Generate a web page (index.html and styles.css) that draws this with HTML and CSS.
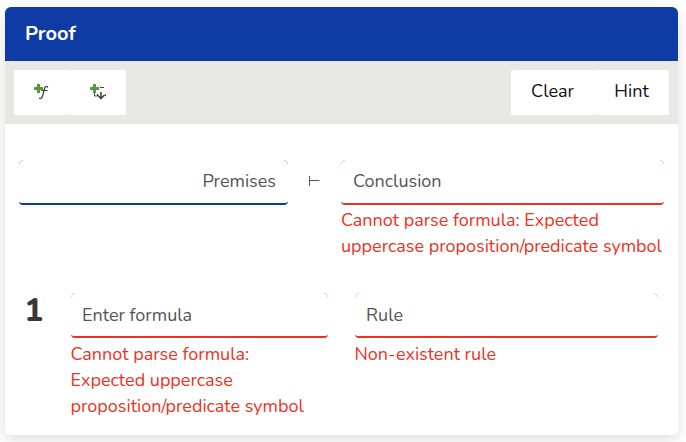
FILE: index.html
```html
<!DOCTYPE html>
<html lang="en">
<head>
<meta charset="utf-8">
<title>Proof</title>
<link rel="stylesheet" href="styles.css">
</head>
<body>
<main class="card">
  <header class="card-header">Proof</header>
  <div class="toolbar">
    <div class="group">
      <button class="btn icon-btn" aria-label="Add formula">
        <svg width="16" height="18" viewBox="0 0 16 18"><path class="curve" d="M13.600 4.100C12.600 2.800 11.200 3.400 10.600 5.500L8.700 12.500C8 15.300 6.800 16.100 5.500 15.200"/><path class="arrow" d="M7 7.500h6.500"/><path class="plus" d="M3 1h3v3h3v3H6v3H3V7H0V4h3z"/></svg>
      </button>
      <button class="btn icon-btn" aria-label="Add box">
        <svg width="16" height="18" viewBox="0 0 16 18"><path class="arrow" d="M10 4.500h4M4.500 10v3H7M7.500 11v2M15.500 11v2"/><path class="arrow-bold" d="M11 9v6.500M7.500 12L11 15.500L14.500 12"/><path class="plus" d="M3 1h3v3h3v3H6v3H3V7H0V4h3z"/></svg>
      </button>
    </div>
    <div class="group">
      <button class="btn clear">Clear</button>
      <button class="btn hint">Hint</button>
    </div>
  </div>
  <section class="sequent">
    <div class="field ok"><div class="input right">Premises</div></div>
    <svg class="turnstile" width="12" height="10" viewBox="0 0 12 10"><path d="M1.500 0v10M1.500 4.500H11.500"/></svg>
    <div class="field error">
      <div class="input">Conclusion</div>
      <p class="message">Cannot parse formula: Expected<br>uppercase proposition/predicate symbol</p>
    </div>
  </section>
  <section class="step">
    <div class="number">1</div>
    <div class="field error">
      <div class="input">Enter formula</div>
      <p class="message">Cannot parse formula:<br>Expected uppercase<br>proposition/predicate symbol</p>
    </div>
    <div class="field error">
      <div class="input">Rule</div>
      <p class="message">Non-existent rule</p>
    </div>
  </section>
</main>
</body>
</html>
```
FILE: styles.css
```css
* { box-sizing: border-box; }
body {
  margin: 0;
  padding: 7px 8px 7px 5px;
  height: 442px;
  overflow: hidden;
  background: #fff;
  font: 18px/26px Nunito, Lato, sans-serif;
  color: #555;
}
.card {
  height: 428px;
  border-radius: 6px;
  overflow: hidden;
  background: #fff;
  box-shadow: 0 5px 15px rgba(0, 0, 0, .13);
}
.card-header {
  height: 54px;
  padding: 0 20px;
  background: #0f3ca4;
  color: #fff;
  font-size: 20px;
  font-weight: 700;
  line-height: 53px;
}
.toolbar {
  display: flex;
  justify-content: space-between;
  height: 63px;
  padding: 9px;
  background: #e8e8e6;
}
.group { display: flex; }
.btn {
  height: 45px;
  padding: 0 0 4px;
  border: 0;
  border-radius: 2px;
  background: #fff;
  color: #111;
  font: inherit;
}
.icon-btn {
  display: flex;
  align-items: flex-start;
  width: 56px;
  padding: 13px 0 0 20px;
}
.clear { width: 83px; }
.hint { width: 75px; }
.curve { fill: none; stroke: #444; stroke-width: 1.3; stroke-linecap: round; }
.plus { fill: #519a42; }
.arrow { fill: none; stroke: #444; stroke-width: 1; }
.arrow-bold { fill: none; stroke: #444; stroke-width: 1.6; }
.sequent {
  display: grid;
  grid-template-columns: 269px 53px 323px;
  height: 133px;
  margin: 36px 14px 0;
}
.turnstile { margin: 16px 0 0 20px; fill: none; stroke: #555; stroke-width: 1; }
.step {
  display: grid;
  grid-template-columns: 30px 257px 303px;
  column-gap: 27px;
  padding-left: 9px;
}
.step .number {
  padding-left: 10.5px;
  color: #383838;
  font-size: 31px;
  font-weight: 800;
  line-height: 36px;
}
.ok { --line: #0f3ca4; --tint: #b5c3e5; }
.error { --line: #ea3323; --tint: #f7c0bb; }
.input {
  height: 45px;
  padding: 8px 12px;
  border-bottom: 2px solid var(--line);
  border-radius: 4px;
  background:
    radial-gradient(circle at 4px 4px, transparent 2.7px, var(--tint) 3.5px, transparent 4.3px) left top / 4px 4px no-repeat,
    radial-gradient(circle at 0 4px, transparent 2.7px, var(--tint) 3.5px, transparent 4.3px) right top / 4px 4px no-repeat;
}
.right { text-align: right; }
.message { margin: 2px 0 0; color: #ea3323; white-space: nowrap; }
.step .input { padding: 9px 11px; }
.step .message { margin: 3px 0 0 -0.5px; }
```
